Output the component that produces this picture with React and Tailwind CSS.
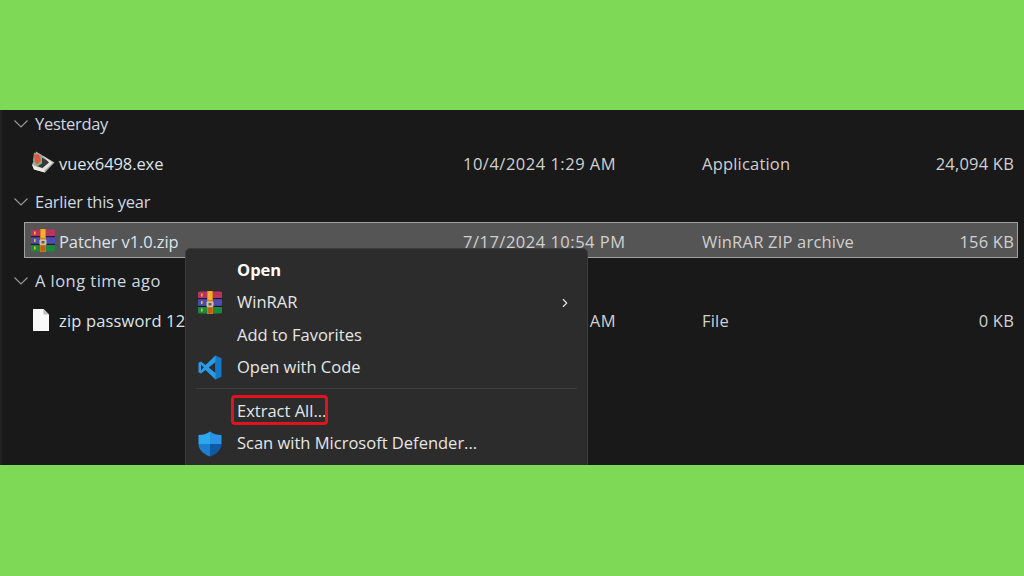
import React from 'react';
import { ChevronRight } from 'lucide-react';

const RarIcon = () => (
  <svg width="24" height="23" viewBox="0 0 24 23" className="shrink-0">
    <rect x="0" y="0.5" width="24" height="7" rx="1.5" fill="#b8335e" />
    <rect x="0" y="8" width="24" height="7" rx="1" fill="#4f4bb0" />
    <rect x="0" y="15.5" width="24" height="7" rx="1.5" fill="#1c8a3c" />
    <rect x="0" y="7" width="24" height="1.2" fill="#241a28" />
    <rect x="0" y="14.8" width="24" height="1.2" fill="#1a1c2a" />
    <rect x="3" y="2.5" width="1.6" height="3" fill="#f0b82c" />
    <rect x="3" y="10" width="1.6" height="3" fill="#f0b82c" />
    <rect x="3" y="17.5" width="1.6" height="3" fill="#f0b82c" />
    <rect x="9" y="0" width="6" height="23" fill="#d8841e" />
    <rect x="10" y="0" width="4" height="9" rx="1.5" fill="#f0b030" />
    <rect x="8.5" y="10.5" width="7" height="5.5" rx="1" fill="#c9c2b0" />
    <rect x="10.5" y="12" width="3" height="2.5" fill="#6b5a40" />
    <rect x="9.5" y="16.5" width="5" height="6" fill="#bf5e1a" />
  </svg>
);

const ExeIcon = () => (
  <svg width="24" height="23" viewBox="0 0 24 22" className="shrink-0">
    <path d="M5 0 L23.5 11 L14 21 L3 18 L1 13 L3 9 Z" fill="#a8a8a4" />
    <path d="M9 5 L20.5 11.5 L13 17 L6 14.5 L9 11 Z" fill="#3a3a3a" />
    <path d="M12 4.5 L22 11 L14 18.5 L11 17 L18 11 Z" fill="#e4e4e0" />
    <path d="M1 13 L4 14.5 L13 17.5 L14 21 L3 18 Z" fill="#ececE8" />
    <path d="M3 1 L11 5 L11 12 L6 15 L2 9 Z" fill="#7cb573" />
    <path d="M3 3 L8 3 L10 9 L6 13 L4 10 Z" fill="#e8504c" />
  </svg>
);

const FileIcon = () => (
  <svg width="17" height="22" viewBox="0 0 17 22" className="shrink-0 mr-[5px]">
    <path d="M1 0 H11.5 L17 5.5 V22 H1 Z" fill="#fafafa" />
    <path d="M11.5 0 V5.5 H17 Z" fill="#bdbdbd" />
  </svg>
);

const CodeIcon = () => (
  <svg width="24" height="25" viewBox="0 0 24 25" className="shrink-0">
    <path d="M17.5 0.5 L7.5 10 L3 6.6 L0.5 7.8 V17.2 L3 18.4 L7.5 15 L17.5 24.5 L19 23 V2 Z M17.5 7 V18 L10.8 12.5 Z M3 9.5 L5.8 12.5 L3 15.5 Z" fill="#2a9be8" fillRule="evenodd" />
    <path d="M17.5 0.5 L23.5 3.2 V21.8 L17.5 24.5 Z" fill="#1278c8" />
  </svg>
);

const ShieldIcon = () => (
  <svg width="24" height="26" viewBox="0 0 24 26" className="shrink-0">
    <path d="M12 0.5 C15 3 19 4 23.5 4 V13 H12 Z" fill="#2a93e6" />
    <path d="M12 0.5 C9 3 5 4 0.5 4 V13 H12 Z" fill="#2ba8ee" />
    <path d="M12 13 V25.5 C6 23.5 0.5 19 0.5 13 Z" fill="#1c7fd2" />
    <path d="M12 13 H23.5 C23.5 19 18 23.5 12 25.5 Z" fill="#0e5aa4" />
  </svg>
);

const GroupHeader = ({ label, tracking }) => (
  <div className="flex items-center h-[28px] pl-[12px] text-[#cfd8e0]">
    <svg width="14" height="8" viewBox="0 0 14 8" className="mr-[7px] shrink-0">
      <path d="M0.5 0.5 L7 7 L13.5 0.5" fill="none" stroke="#9a9a9a" strokeWidth="1.1" />
    </svg>
    <span className={tracking}>{label}</span>
  </div>
);

const FileRow = ({ icon, name, date, type, size, selected, nameTracking }) => (
  <div className={`ml-[22px] mr-[6px] mt-[6px] h-[36px] pt-[4px] grid grid-cols-[438px_239px_1fr_84px] items-center border ${selected ? 'bg-[#555555] border-[#a0a0a0]' : 'border-transparent'}`}>
    <div className="flex items-center">
      <div className="w-[34px] flex justify-center pl-[2px] -mt-[3px]">{icon}</div>
      <span className={`text-[#dce4ea] ${nameTracking}`}>{name}</span>
    </div>
    <span className="text-[#d0d0d0] tracking-[0.5px]">{date}</span>
    <span className="text-[#d0d0d0] tracking-[0.2px]">{type}</span>
    <span className="text-[#d0d0d0] text-right pr-[3px] tracking-[0.2px]">{size}</span>
  </div>
);

const MenuItem = ({ icon, children, bold, right }) => (
  <div className={`flex items-center h-[32.5px] ${bold ? 'font-bold text-white' : 'text-[#e6e6e6]'}`}>
    <div className="w-[51px] pl-[12px] flex items-center">{icon}</div>
    <span className="flex-1">{children}</span>
    {right}
  </div>
);

export default function App() {
  return (
    <div className="w-[1024px] h-[576px] bg-[#7ed957] flex flex-col overflow-hidden" style={{ fontFamily: '"Open Sans", sans-serif' }}>
      <div className="h-[110px]" />
      <div className="relative h-[355px] bg-[#191919] border-l-2 border-[#222222] overflow-hidden text-[16.5px]">
        <GroupHeader label="Yesterday" tracking="tracking-[-0.3px]" />
        <FileRow icon={<ExeIcon />} name="vuex6498.exe" date="10/4/2024 1:29 AM" type="Application" size="24,094 KB" nameTracking="tracking-[-0.1px]" />
        <div className="mt-[8px]">
          <GroupHeader label="Earlier this year" tracking="tracking-[-0.25px]" />
        </div>
        <FileRow selected icon={<RarIcon />} name="Patcher v1.0.zip" date="7/17/2024 10:54 PM" type="WinRAR ZIP archive" size="156 KB" nameTracking="tracking-[-0.1px]" />
        <div className="mt-[9px]">
          <GroupHeader label="A long time ago" tracking="tracking-[0.45px]" />
        </div>
        <FileRow icon={<FileIcon />} name="zip password 123.txt" date="7/17/2024 1:54 AM" type="File" size="0 KB" nameTracking="tracking-[0.15px]" />

        {/* context menu */}
        <div className="absolute left-[183px] top-[138px] w-[403px] h-[240px] bg-[#2c2c2c] border border-[#3c3c3c] rounded-[5px] pt-[5px]">
          <MenuItem bold>Open</MenuItem>
          <MenuItem icon={<RarIcon />} right={<ChevronRight className="w-[14px] h-[14px] text-[#e0e0e0] mr-[15px]" strokeWidth={2} />}>WinRAR</MenuItem>
          <MenuItem>Add to Favorites</MenuItem>
          <MenuItem icon={<CodeIcon />}>Open with Code</MenuItem>
          <div className="h-px bg-[#3e3e3e] mx-[10px] mt-[4px] mb-[6px]" />
          <MenuItem>
            <span className="relative">
              Extract All...
              <span className="absolute -left-[6px] -right-[2px] -top-[4px] -bottom-[3px] border-[3px] border-[#e0141e] rounded-[4px]" />
            </span>
          </MenuItem>
          <MenuItem icon={<ShieldIcon />}>Scan with Microsoft Defender...</MenuItem>
        </div>
      </div>
      <div className="flex-1" />
    </div>
  );
}
